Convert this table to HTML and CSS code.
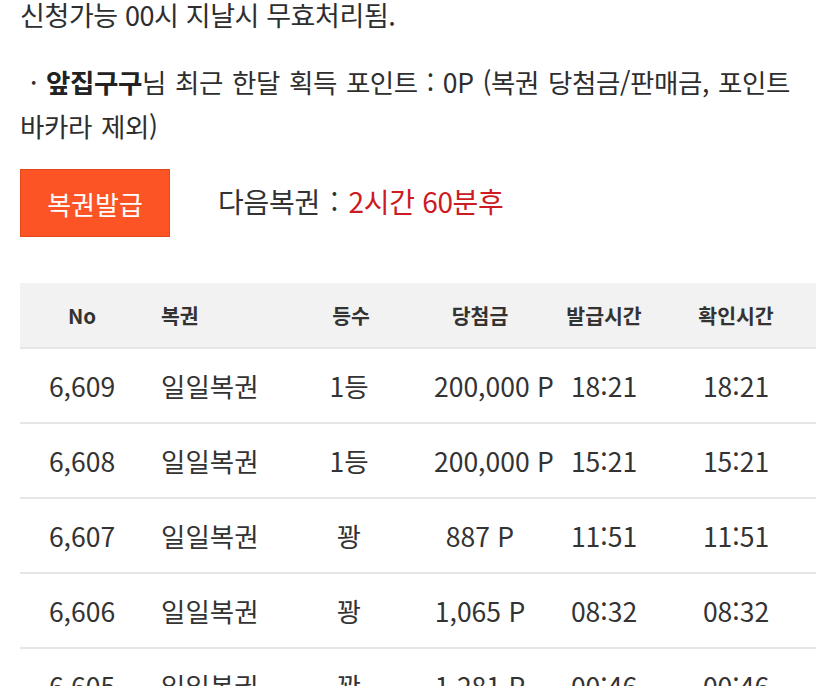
FILE: index.html
```html
<!DOCTYPE html>
<html lang="ko">
<head>
<meta charset="utf-8">
<title>복권</title>
<link rel="stylesheet" href="styles.css">
</head>
<body>
<div class="page">
  <p class="notice">신청가능 00시 지날시 무효처리됨.</p>
  <p class="points">· <b>앞집구구</b>님 최근 한달 획득 포인트 : 0P (복권 당첨금/판매금, 포인트 바카라 제외)</p>

  <div class="issue">
    <button class="issue-btn" type="button">복권발급</button>
    <div class="next">다음복권 : <span class="remain">2시간 60분후</span></div>
  </div>

  <div class="table">
    <div class="row head">
      <div class="c c-no">No</div>
      <div class="c c-name">복권</div>
      <div class="c c-rank">등수</div>
      <div class="c c-prize">당첨금</div>
      <div class="c c-issued">발급시간</div>
      <div class="c c-checked">확인시간</div>
    </div>
    <div class="row">
      <div class="c c-no">6,609</div>
      <div class="c c-name">일일복권</div>
      <div class="c c-rank">1등</div>
      <div class="c c-prize">200,000 P</div>
      <div class="c c-issued">18:21</div>
      <div class="c c-checked">18:21</div>
    </div>
    <div class="row">
      <div class="c c-no">6,608</div>
      <div class="c c-name">일일복권</div>
      <div class="c c-rank">1등</div>
      <div class="c c-prize">200,000 P</div>
      <div class="c c-issued">15:21</div>
      <div class="c c-checked">15:21</div>
    </div>
    <div class="row">
      <div class="c c-no">6,607</div>
      <div class="c c-name">일일복권</div>
      <div class="c c-rank">꽝</div>
      <div class="c c-prize">887 P</div>
      <div class="c c-issued">11:51</div>
      <div class="c c-checked">11:51</div>
    </div>
    <div class="row">
      <div class="c c-no">6,606</div>
      <div class="c c-name">일일복권</div>
      <div class="c c-rank">꽝</div>
      <div class="c c-prize">1,065 P</div>
      <div class="c c-issued">08:32</div>
      <div class="c c-checked">08:32</div>
    </div>
    <div class="row">
      <div class="c c-no">6,605</div>
      <div class="c c-name">일일복권</div>
      <div class="c c-rank">꽝</div>
      <div class="c c-prize">1,281 P</div>
      <div class="c c-issued">00:46</div>
      <div class="c c-checked">00:46</div>
    </div>
  </div>
</div>
</body>
</html>
```
FILE: styles.css
```css
html, body {
  margin: 0;
  padding: 0;
  background: #ffffff;
}
body {
  font-family: "Noto Sans CJK KR", "Noto Sans", sans-serif;
  color: #333333;
}
.page {
  padding: 0 19px 0 20px;
}
.notice {
  margin: 0;
  font-size: 27px;
  line-height: 30px;
  letter-spacing: -0.4px;
  color: #2e2e2e;
}
.points {
  margin: 30px 0 0;
  text-indent: 10px;
  font-size: 26.5px;
  line-height: 44px;
  letter-spacing: -0.4px;
  word-spacing: 2px;
  color: #2e2e2e;
}
.points b {
  font-weight: 700;
  color: #222222;
}
.issue {
  display: flex;
  align-items: center;
  margin-top: 21px;
}
.issue-btn {
  width: 150px;
  height: 68px;
  border: 1px solid #e3491e;
  background: #fd5426;
  color: #ffffff;
  font-family: inherit;
  font-size: 26px;
  padding: 0;
  margin: 0;
}
.next {
  margin-left: 48px;
  padding-bottom: 4px;
  font-size: 28px;
  color: #333333;
  letter-spacing: -0.3px;
  word-spacing: 3px;
}
.remain {
  color: #cc1b22;
  word-spacing: 0;
}
.table {
  margin-top: 46px;
  width: 796px;
}
.row {
  display: grid;
  grid-template-columns: 124px 156px 98px 128px 156px 108px;
  height: 73px;
  border-bottom: 2px solid #e6e6e6;
  font-size: 26.5px;
  color: #333333;
}
.row.head {
  height: 64px;
  background: #f2f2f2;
  font-size: 20.5px;
  font-weight: 700;
  color: #333333;
}
.c {
  display: flex;
  align-items: center;
  justify-content: center;
  white-space: nowrap;
  min-width: 0;
}
.c-name {
  justify-content: flex-start;
  padding-left: 17px;
}
.c-prize {
  padding-left: 36px;
  justify-content: safe center;
}
.head .c-rank {
  padding-left: 4px;
}
```
